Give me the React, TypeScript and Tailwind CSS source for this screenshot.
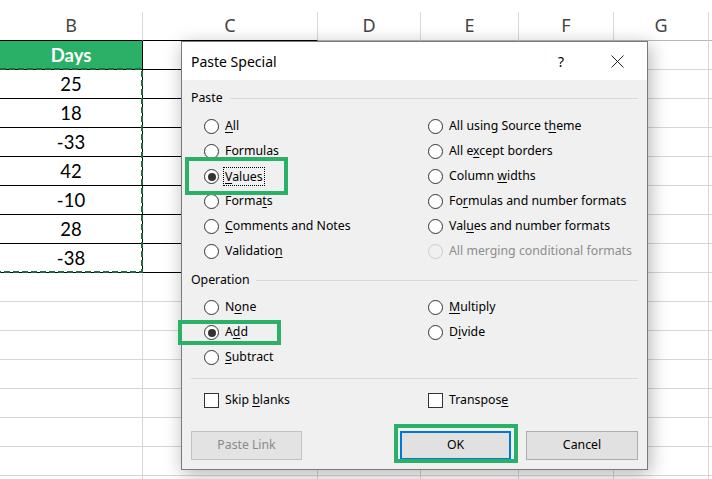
import React from "react";

interface Col {
  key: string;
  w: string;
}

const COLS: Col[] = [
  { key: "B", w: "w-[143px]" },
  { key: "C", w: "w-[175px]" },
  { key: "D", w: "w-[103px]" },
  { key: "E", w: "w-[98px]" },
  { key: "F", w: "w-[95px]" },
  { key: "G", w: "w-[95px]" },
  { key: "", w: "w-[60px]" },
];

const DAYS = ["25", "18", "-33", "42", "-10", "28", "-38"];

// label text + index of the access-key letter (-1 = none)
type Opt = { text: string; u: number; checked?: boolean; disabled?: boolean; focus?: boolean } | null;

const PASTE_OPTS: Opt[] = [
  { text: "All", u: 0 },
  { text: "All using Source theme", u: 18 },
  { text: "Formulas", u: 0 },
  { text: "All except borders", u: 5 },
  { text: "Values", u: 0, checked: true, focus: true },
  { text: "Column widths", u: 7 },
  { text: "Formats", u: 5 },
  { text: "Formulas and number formats", u: 2 },
  { text: "Comments and Notes", u: 0 },
  { text: "Values and number formats", u: 3 },
  { text: "Validation", u: 9 },
  { text: "All merging conditional formats", u: -1, disabled: true },
];

const OP_OPTS: Opt[] = [
  { text: "None", u: 1 },
  { text: "Multiply", u: 0 },
  { text: "Add", u: 1, checked: true },
  { text: "Divide", u: 1 },
  { text: "Subtract", u: 0 },
  null,
];

const AccessLabel: React.FC<{ text: string; u: number }> = ({ text, u }) => {
  if (u < 0) return <>{text}</>;
  return (
    <>
      {text.slice(0, u)}
      <span className="underline decoration-1 underline-offset-[2px]">{text[u]}</span>
      {text.slice(u + 1)}
    </>
  );
};

const Radio: React.FC<{ opt: Opt }> = ({ opt }) => {
  if (!opt) return <div className="h-[25px]" />;
  return (
    <div className="flex h-[25px] items-center gap-[6px]">
      <span
        className={
          opt.disabled
            ? "flex h-[15px] w-[15px] shrink-0 items-center justify-center rounded-full border border-[#cccccc] bg-[#f0f0f0]"
            : "flex h-[15px] w-[15px] shrink-0 items-center justify-center rounded-full border border-[#333333] bg-white"
        }
      >
        {opt.checked && <span className="h-[8px] w-[8px] rounded-full bg-[#333333]" />}
      </span>
      {opt.focus ? (
        <span className="-ml-[2px] border border-dotted border-black px-px leading-[17px]">
          <AccessLabel text={opt.text} u={opt.u} />
        </span>
      ) : (
        <span className={opt.disabled ? "text-[#8d8d8d]" : ""}>
          <AccessLabel text={opt.text} u={opt.u} />
        </span>
      )}
    </div>
  );
};

const Legend: React.FC<{ title: string; className?: string }> = ({ title, className }) => (
  <div className={"flex h-[20px] items-center gap-[7px] " + (className ?? "")}>
    <span>{title}</span>
    <div className="h-px flex-1 bg-[#d9d9d9]" />
  </div>
);

const Checkbox: React.FC<{ text: string; u: number }> = ({ text, u }) => (
  <div className="flex h-[25px] items-center gap-[6px]">
    <span className="h-[15px] w-[15px] shrink-0 border border-[#333333] bg-white" />
    <span>
      <AccessLabel text={text} u={u} />
    </span>
  </div>
);

const Sheet: React.FC = () => {
  const rows = Array.from({ length: 16 }, (_, i) => i + 1);
  return (
    <div className="flex flex-col font-['Lato',sans-serif]">
      <div className="h-[12px] bg-white" />
      {/* column headers */}
      <div className="flex">
        {COLS.map((c, ci) => (
          <div
            key={c.key + ci}
            className={
              "flex h-[29px] shrink-0 items-center justify-center border-b border-r border-r-[#dadada] pb-[2px] font-['Noto_Sans',sans-serif] text-[18px] text-[#444444] " +
              c.w +
              (ci < 2 ? " border-b-black" : " border-b-[#b8b8b8]")
            }
          >
            {c.key}
          </div>
        ))}
      </div>
      {rows.map((r) => (
        <div key={r} className="flex">
          {COLS.map((c, ci) => {
            const inTable = r <= 8 && ci < 2;
            const isHead = r === 1 && ci === 0;
            const value = ci === 0 && r > 1 && r <= 8 ? DAYS[r - 2] : isHead ? "Days" : "";
            return (
              <div
                key={c.key + ci}
                className={
                  "flex h-[29px] shrink-0 items-center justify-center border-b border-r pt-[2px] text-[18.5px] " +
                  c.w +
                  (inTable ? " border-black" : " border-[#d6d6d6]") +
                  (isHead ? " bg-[#2bb067] font-bold text-white" : " text-black")
                }
              >
                {value}
              </div>
            );
          })}
        </div>
      ))}
    </div>
  );
};

const App: React.FC = () => {
  return (
    <div className="relative h-[479px] w-[712px] overflow-hidden bg-white">
      <Sheet />

      {/* copy marquee round B2:B8 */}
      <svg className="absolute left-[-10px] top-[68px]" width="154" height="206">
        <rect x="1" y="1" width="151" height="203" fill="none" stroke="#1d6b3f" strokeWidth="2" strokeDasharray="6 3" />
      </svg>

      {/* Paste Special dialog */}
      <div className="absolute left-[181px] top-[41px] flex h-[429px] w-[467px] flex-col border border-[#7a7a7a] bg-[#f0f0f0] font-['Noto_Sans',sans-serif] text-[12.3px] text-black shadow-[2px_4px_18px_rgba(0,0,0,0.3)]">
        <div className="flex h-[38px] shrink-0 items-center bg-white pl-[9px]">
          <span className="text-[14px]">Paste Special</span>
          <span className="ml-auto text-[14px]">?</span>
          <svg className="ml-[47px] mr-[23px]" width="13" height="13" viewBox="0 0 13 13">
            <path d="M0.5 0.5 L12.5 12.5 M12.5 0.5 L0.5 12.5" stroke="#222" strokeWidth="1" fill="none" />
          </svg>
        </div>

        <div className="flex flex-col px-[9px]">
          <Legend title="Paste" className="mt-[8px]" />
          <div className="mt-[6px] grid grid-cols-[224px_1fr] pl-[13px]">
            {PASTE_OPTS.map((o, i) => (
              <Radio key={i} opt={o} />
            ))}
          </div>

          <Legend title="Operation" className="mt-[6px]" />
          <div className="mt-[5px] grid grid-cols-[224px_1fr] pl-[13px]">
            {OP_OPTS.map((o, i) => (
              <Radio key={i} opt={o} />
            ))}
          </div>

          <div className="mt-[8px] h-px bg-[#d9d9d9]" />

          <div className="mt-[9px] grid grid-cols-[224px_1fr] pl-[13px]">
            <Checkbox text="Skip blanks" u={5} />
            <Checkbox text="Transpose" u={8} />
          </div>

          <div className="mt-[18px] flex items-center">
            <div className="flex h-[29px] w-[111px] items-center justify-center border border-[#c2c2c2] bg-[#e3e3e3] text-[#8a8a8a]">
              Paste <span className="ml-[3px]">Link</span>
            </div>
            <div className="ml-auto flex gap-[15px]">
              <div className="flex h-[29px] w-[111px] items-center justify-center border-2 border-[#0078d7] bg-[#e1e1e1]">
                OK
              </div>
              <div className="flex h-[29px] w-[112px] items-center justify-center border border-[#adadad] bg-[#e1e1e1]">
                Cancel
              </div>
            </div>
          </div>
        </div>

        {/* green annotation boxes */}
        <div className="pointer-events-none absolute left-[3px] top-[115px] h-[38px] w-[103px] border-4 border-[#2bb067]" />
        <div className="pointer-events-none absolute left-[-4px] top-[278px] h-[25px] w-[103px] border-4 border-[#2bb067]" />
        <div className="pointer-events-none absolute left-[212px] top-[382px] h-[39px] w-[124px] border-4 border-[#2bb067]" />
      </div>
    </div>
  );
};

export default App;
